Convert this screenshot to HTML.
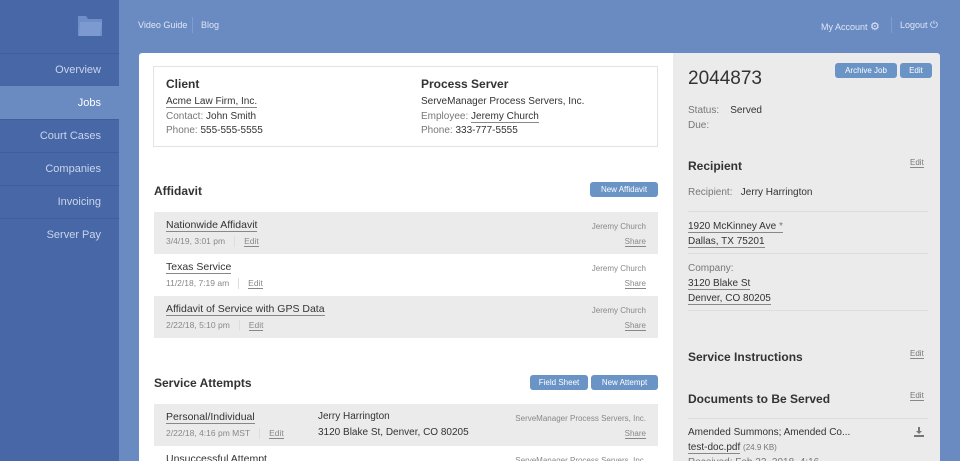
<!DOCTYPE html>
<html style="width:960px;height:461px;overflow:hidden"><head><meta charset="utf-8"><style>
*{box-sizing:border-box;margin:0;padding:0}
body{width:960px;height:461px;overflow:hidden;background:#6a8ac2;font-family:"Liberation Sans",sans-serif;position:relative;font-size:10px;color:#333}
.abs{position:absolute}
#side{left:0;top:0;width:119px;height:461px;background:#4767a6}
.nav{position:absolute;left:0;width:119px;height:33px;line-height:33px;text-align:right;padding-right:18px;color:#c9d5ec;font-size:11px;border-top:1px solid #3f5e9a}
.nav.act{background:#6a8ac2;color:#fff;border-color:#6a8ac2}
.top{color:#dfe7f5;font-size:9px;top:20px}
#main{left:139px;top:53px;width:534px;height:408px;background:#fff;border-radius:3px 0 0 0;overflow:hidden}
#right{left:673px;top:53px;width:267px;height:408px;background:#ebebeb;border-radius:0 3px 0 0;overflow:hidden}
.btn{position:absolute;background:#6a93c6;color:#fff;font-size:8px;height:15px;line-height:15px;text-align:center;border-radius:3px}
u{text-decoration:none;border-bottom:1px solid #888}
.g{color:#777}
.h{font-weight:bold;font-size:12px;color:#333}
.row{position:absolute;left:15px;width:504px;height:42px}
.row .t{position:absolute;left:12px;top:7px;font-size:10.5px}
.row .d{position:absolute;left:12px;top:24px;font-size:8.5px;color:#888}
.row .r1{position:absolute;right:12px;top:10px;font-size:8px;color:#888}
.row .r2{position:absolute;right:12px;top:25px;font-size:8px;color:#888}
.sep{display:inline-block;width:1px;height:11px;background:#ddd;vertical-align:middle;margin:0 9px}
.rt{font-size:10px}
</style></head><body>
<div id="side" class="abs">
<svg class="abs" style="left:76px;top:13px" width="28" height="26" viewBox="0 0 28 26"><path d="M2 3h8l2 3h14v17H2z" fill="#6f8dc6"/><path d="M4 9h22l-2 14H3z" fill="#7d9ad0"/></svg>
<div class="nav" style="top:53px">Overview</div>
<div class="nav act" style="top:86px">Jobs</div>
<div class="nav" style="top:119px">Court Cases</div>
<div class="nav" style="top:152px">Companies</div>
<div class="nav" style="top:185px">Invoicing</div>
<div class="nav" style="top:218px">Server Pay</div>
</div>
<div class="abs top" style="left:138px">Video Guide</div>
<div class="abs" style="left:192px;top:17px;width:1px;height:16px;background:#7f9dd0"></div>
<div class="abs top" style="left:201px">Blog</div>
<div class="abs top" style="left:821px">My Account <span style="font-size:11px">⚙</span></div>
<div class="abs" style="left:891px;top:17px;width:1px;height:16px;background:#7f9dd0"></div>
<div class="abs top" style="left:900px">Logout <span style="font-size:10px">⏻</span></div>

<div id="main" class="abs">
<div class="abs" style="left:14px;top:13px;width:505px;height:81px;border:1px solid #e3e3e3"></div>
<div class="abs h" style="left:27px;top:24px">Client</div>
<div class="abs rt" style="left:27px;top:43px"><u>Acme Law Firm, Inc.</u></div>
<div class="abs rt" style="left:27px;top:58px"><span class="g">Contact:</span> John Smith</div>
<div class="abs rt" style="left:27px;top:72px"><span class="g">Phone:</span> 555-555-5555</div>
<div class="abs h" style="left:282px;top:24px">Process Server</div>
<div class="abs rt" style="left:282px;top:43px">ServeManager Process Servers, Inc.</div>
<div class="abs rt" style="left:282px;top:58px"><span class="g">Employee:</span> <u>Jeremy Church</u></div>
<div class="abs rt" style="left:282px;top:72px"><span class="g">Phone:</span> 333-777-5555</div>

<div class="abs h" style="left:15px;top:131px">Affidavit</div>
<div class="btn" style="left:451px;top:129px;width:68px">New Affidavit</div>
<div class="row" style="top:159px;background:#ebebeb"><div class="t"><u>Nationwide Affidavit</u></div><div class="d">3/4/19, 3:01 pm<span class="sep"></span><u>Edit</u></div><div class="r1">Jeremy Church</div><div class="r2"><u>Share</u></div></div>
<div class="row" style="top:201px"><div class="t"><u>Texas Service</u></div><div class="d">11/2/18, 7:19 am<span class="sep"></span><u>Edit</u></div><div class="r1">Jeremy Church</div><div class="r2"><u>Share</u></div></div>
<div class="row" style="top:243px;background:#ebebeb"><div class="t"><u>Affidavit of Service with GPS Data</u></div><div class="d">2/22/18, 5:10 pm<span class="sep"></span><u>Edit</u></div><div class="r1">Jeremy Church</div><div class="r2"><u>Share</u></div></div>

<div class="abs h" style="left:15px;top:323px">Service Attempts</div>
<div class="btn" style="left:391px;top:322px;width:58px">Field Sheet</div>
<div class="btn" style="left:452px;top:322px;width:67px">New Attempt</div>
<div class="row" style="top:351px;background:#ebebeb"><div class="t"><u>Personal/Individual</u></div><div class="d">2/22/18, 4:16 pm MST<span class="sep"></span><u>Edit</u></div>
<div class="abs rt" style="left:164px;top:7px">Jerry Harrington</div><div class="abs rt" style="left:164px;top:23px">3120 Blake St, Denver, CO 80205</div>
<div class="r1">ServeManager Process Servers, Inc.</div><div class="r2"><u>Share</u></div></div>
<div class="row" style="top:393px"><div class="t">Unsuccessful Attempt</div><div class="r1">ServeManager Process Servers, Inc.</div></div>
</div>

<div id="right" class="abs">
<div class="abs" style="left:15px;top:15px;font-size:19px;color:#333">2044873</div>
<div class="btn" style="left:162px;top:10px;width:62px">Archive Job</div>
<div class="btn" style="left:227px;top:10px;width:32px">Edit</div>
<div class="abs rt" style="left:15px;top:52px"><span class="g">Status:</span> &nbsp;&nbsp;&nbsp;Served</div>
<div class="abs rt g" style="left:15px;top:67px">Due:</div>
<div class="abs h" style="left:15px;top:106px">Recipient</div>
<div class="abs g" style="left:237px;top:105px;font-size:8px"><u>Edit</u></div>
<div class="abs rt" style="left:15px;top:134px"><span class="g">Recipient:</span> &nbsp;&nbsp;Jerry Harrington</div>
<div class="abs" style="left:15px;top:158px;width:240px;height:1px;background:#ddd"></div>
<div class="abs rt" style="left:15px;top:168px"><u>1920 McKinney Ave <span class="g">*</span></u></div>
<div class="abs rt" style="left:15px;top:183px"><u>Dallas, TX 75201</u></div>
<div class="abs" style="left:15px;top:200px;width:240px;height:1px;background:#ddd"></div>
<div class="abs rt g" style="left:15px;top:210px">Company:</div>
<div class="abs rt" style="left:15px;top:225px"><u>3120 Blake St</u></div>
<div class="abs rt" style="left:15px;top:240px"><u>Denver, CO 80205</u></div>
<div class="abs" style="left:15px;top:257px;width:240px;height:1px;background:#ddd"></div>
<div class="abs h" style="left:15px;top:297px">Service Instructions</div>
<div class="abs g" style="left:237px;top:296px;font-size:8px"><u>Edit</u></div>
<div class="abs h" style="left:15px;top:339px">Documents to Be Served</div>
<div class="abs g" style="left:237px;top:338px;font-size:8px"><u>Edit</u></div>
<div class="abs" style="left:15px;top:365px;width:240px;height:1px;background:#ddd"></div>
<div class="abs rt" style="left:15px;top:374px">Amended Summons; Amended Co...</div>
<svg class="abs" style="left:241px;top:374px" width="10" height="10" viewBox="0 0 10 10"><path d="M4 0h2v4h2L5 7 2 4h2z M0 8h10v2H0z" fill="#777"/></svg>
<div class="abs rt" style="left:15px;top:389px"><u>test-doc.pdf</u> <span class="g" style="font-size:8px">(24.9 KB)</span></div>
<div class="abs rt g" style="left:15px;top:404px">Received: Feb 22, 2018, 4:16</div>
</div>
</body></html>
